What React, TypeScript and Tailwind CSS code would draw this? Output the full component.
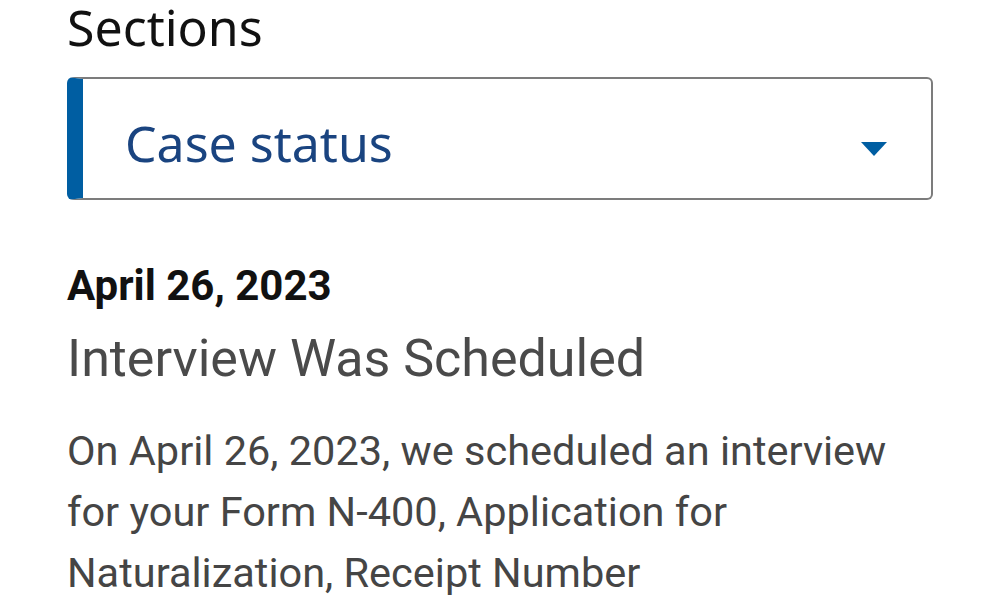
export default function App() {
  return (
    <div className="min-h-[603px] w-[1000px] overflow-hidden bg-white px-[67px] pt-[2px]">
      <div className="font-['Noto_Sans',sans-serif] text-[50px] leading-[50px] text-[#111111]">
        Sections
      </div>

      {/* Section select */}
      <div className="mt-[25px] flex h-[123px] items-start rounded-[6px] border-2 border-l-[16px] border-[#7c7c7c] border-l-[#005ea2] bg-white pl-[42px] pr-[44px]">
        <span className="mt-[31px] flex-1 font-['Noto_Sans',sans-serif] text-[50px] leading-[66px] text-[#1a4480]">
          Case status
        </span>
        <svg className="mt-[63px]" width="26" height="14" viewBox="0 0 26 14">
          <path d="M0 0 H26 L13 14 Z" fill="#005ea2" />
        </svg>
      </div>

      <div className="mt-[61px] font-['Roboto',sans-serif] text-[#111111]">
        <div className="text-[42px] font-bold leading-[50px]">April 26, 2023</div>
        <div className="mt-[18px] text-[52px] leading-[60px] text-[#4a4a4a]">Interview Was Scheduled</div>
        <p className="mt-[31px] text-[41.5px] leading-[61px] text-[#454545]">
          On April 26, 2023, we scheduled an interview
          <br />
          for your Form N-400, Application for
          <br />
          Naturalization, Receipt Number
        </p>
      </div>
    </div>
  );
}
